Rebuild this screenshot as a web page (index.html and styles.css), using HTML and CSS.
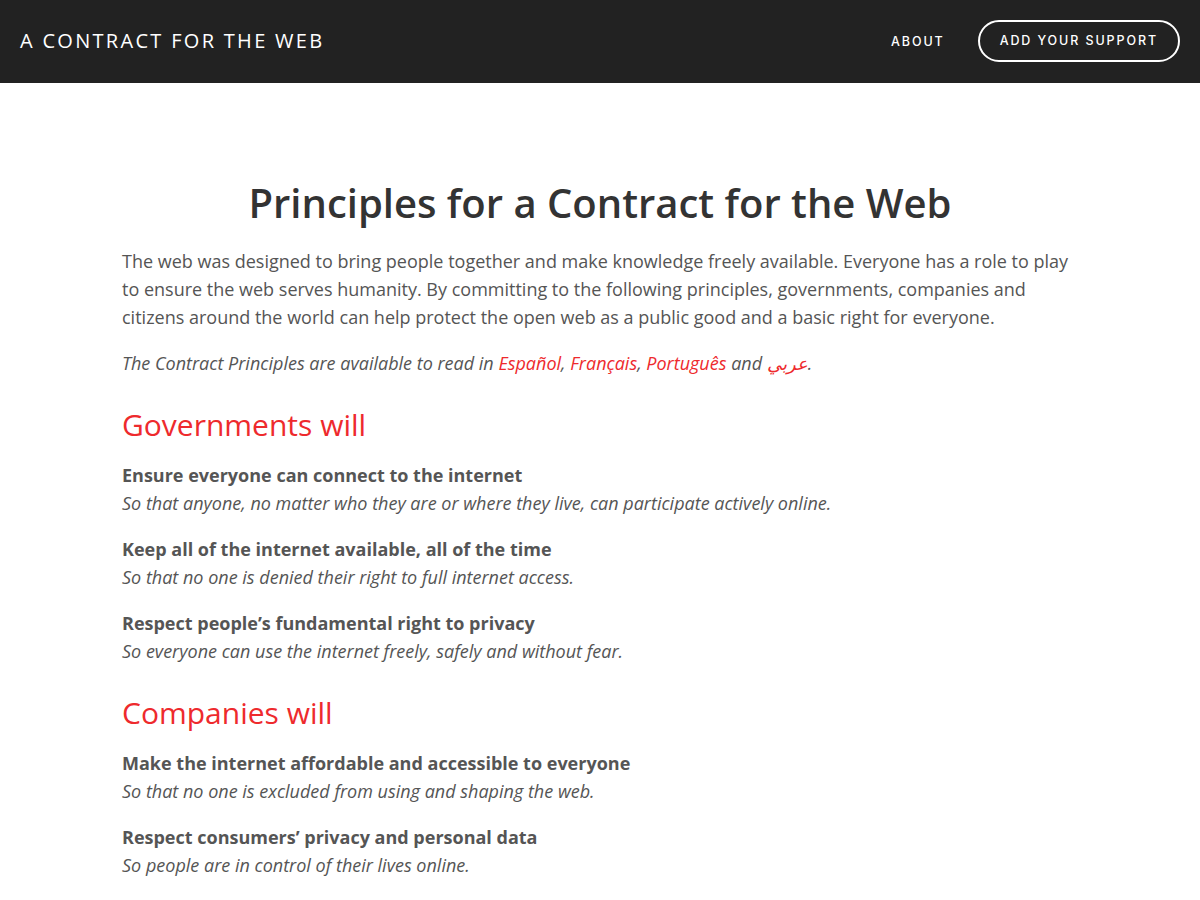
FILE: index.html
```html
<!DOCTYPE html>
<html lang="en">
	<head>
		<meta charset="UTF-8">
		<title>Principles for a Contract for the Web</title>
		<meta name="viewport" content="width=device-width, initial-scale=1">
		<link rel="stylesheet" href="styles.css">
	</head>
	<body>
		<header class="topbar">
			<a class="brand" href="#">A Contract for the Web</a>
			<nav class="nav">
				<a class="nav-link" href="#">About</a>
				<a class="nav-button" href="#">Add your support</a>
			</nav>
		</header>
		<main class="content">
			<h1 class="title">Principles for a Contract for the Web</h1>
			<p class="intro">The web was designed to bring people together and make knowledge freely available. Everyone has a role to play to ensure the web serves humanity. By committing to the following principles, governments, companies and citizens around the world can help protect the open web as a public good and a basic right for everyone.</p>
			<p class="languages">The Contract Principles are available to read in <a href="#">Español</a>, <a href="#">Français</a>, <a href="#">Português</a> and <a href="#" lang="ar">عربي</a>.</p>

			<h2 class="section">Governments will</h2>
			<div class="principle">
				<strong>Ensure everyone can connect to the internet</strong>
				<em>So that anyone, no matter who they are or where they live, can participate actively online.</em>
			</div>
			<div class="principle">
				<strong>Keep all of the internet available, all of the time</strong>
				<em>So that no one is denied their right to full internet access.</em>
			</div>
			<div class="principle">
				<strong>Respect people’s fundamental right to privacy</strong>
				<em>So everyone can use the internet freely, safely and without fear.</em>
			</div>

			<h2 class="section">Companies will</h2>
			<div class="principle">
				<strong>Make the internet affordable and accessible to everyone</strong>
				<em>So that no one is excluded from using and shaping the web.</em>
			</div>
			<div class="principle">
				<strong>Respect consumers’ privacy and personal data</strong>
				<em>So people are in control of their lives online.</em>
			</div>
		</main>
	</body>
</html>
```

FILE: styles.css
```css
body {
	margin: 0;
	font-family: "Open Sans", "DejaVu Sans", sans-serif;
	color: #555;
	background: #fff;
}
a {
	text-decoration: none;
}
.topbar {
	display: flex;
	align-items: center;
	justify-content: space-between;
	height: 83px;
	padding: 0 20px;
	background: #222;
}
.brand {
	margin-top: -2px;
	color: #fff;
	font-size: 20px;
	letter-spacing: 2.3px;
	text-transform: uppercase;
}
.nav {
	display: flex;
	align-items: center;
	gap: 33px;
}
.nav-link,
.nav-button {
	color: #fff;
	font-family: "Inter", "Lato", sans-serif;
	font-size: 12.5px;
	font-weight: 500;
	letter-spacing: 1.9px;
	text-transform: uppercase;
}
.nav-button {
	display: flex;
	align-items: center;
	height: 38px;
	margin-top: -2px;
	padding: 0 20px;
	border: 2px solid #fff;
	border-radius: 21px;
}
.content {
	max-width: 956px;
	margin: 0 auto;
	padding: 96px 0 40px;
}
.title {
	margin: 0 0 20px;
	color: #333;
	font-size: 40px;
	font-weight: 600;
	line-height: 48px;
	text-align: center;
}
.intro,
.languages {
	margin: 0 0 18px;
	font-size: 18px;
	line-height: 28px;
}
.languages {
	font-style: italic;
}
.languages a {
	color: #ee2a2d;
}
.section {
	margin: 28px 0 16px;
	color: #ee2a2d;
	font-size: 30px;
	font-weight: 400;
	line-height: 40px;
}
.principle {
	margin: 0 0 18px;
	font-size: 18px;
	line-height: 28px;
}
.principle strong,
.principle em {
	display: block;
}
.principle strong {
	font-weight: 700;
}
```
